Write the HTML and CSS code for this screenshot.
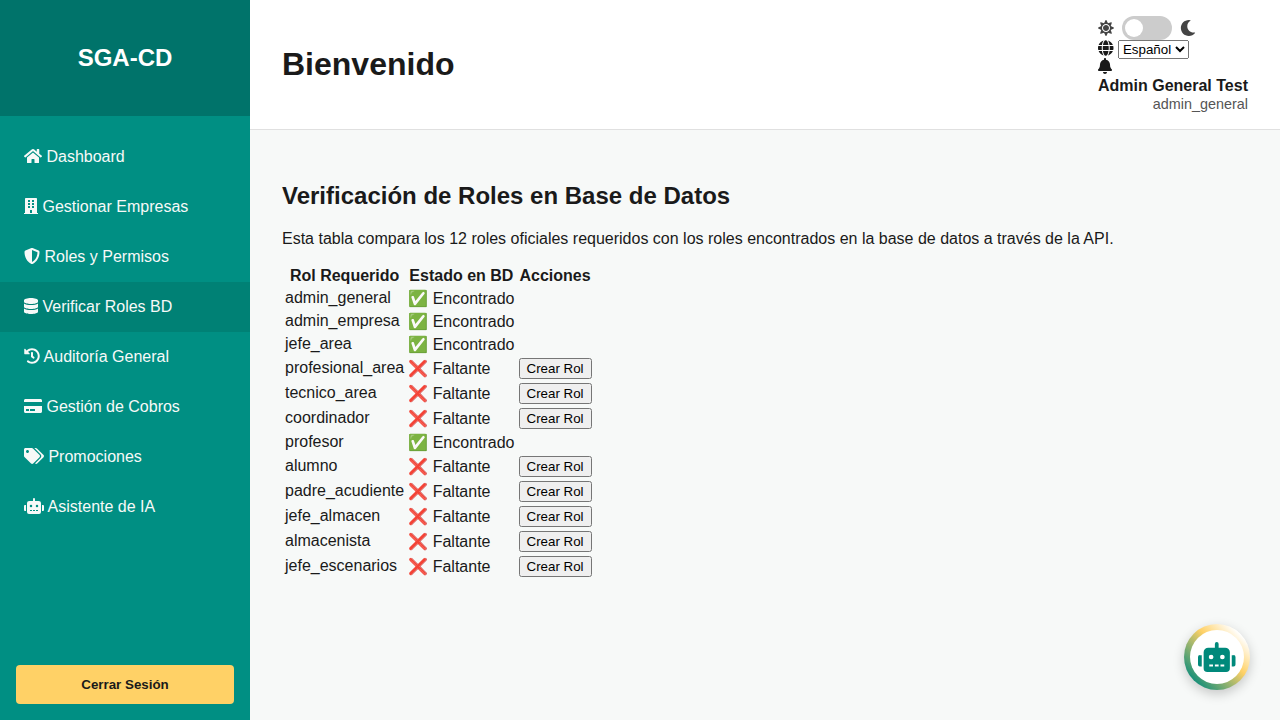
FILE: index.html
```html
<!DOCTYPE html>
<html lang="es">
<head>
    <meta charset="UTF-8">
    <meta name="viewport" content="width=device-width, initial-scale=1.0">
    <title>SGA-CD</title>
    <link rel="stylesheet" href="styles.css">
</head>
<body>
    <div class="app">
        <aside class="sidebar">
            <div class="brand"><h1>SGA-CD</h1></div>
            <nav class="menu">
                <a class="menu-item" href="#"><svg class="icon" viewBox="0 0 576 512"><path d="M280.37 148.26L96 300.11V464a16 16 0 0 0 16 16l112.06-.29a16 16 0 0 0 15.92-16V368a16 16 0 0 1 16-16h64a16 16 0 0 1 16 16v95.64a16 16 0 0 0 16 16.05L464 480a16 16 0 0 0 16-16V300L295.67 148.26a12.19 12.19 0 0 0-15.3 0zM571.6 251.47L488 182.56V44.05a12 12 0 0 0-12-12h-56a12 12 0 0 0-12 12v72.61L318.47 43a48 48 0 0 0-61 0L4.34 251.47a12 12 0 0 0-1.6 16.9l25.5 31A12 12 0 0 0 45.15 301l235.22-193.74a12.19 12.19 0 0 1 15.3 0L530.9 301a12 12 0 0 0 16.9-1.6l25.5-31a12 12 0 0 0-1.7-16.93z"/></svg> Dashboard</a>
                <a class="menu-item" href="#"><svg class="icon" viewBox="0 0 448 512"><path d="M436 480h-20V24c0-13.255-10.745-24-24-24H56C42.745 0 32 10.745 32 24v456H12c-6.627 0-12 5.373-12 12v20h448v-20c0-6.627-5.373-12-12-12zM128 76c0-6.627 5.373-12 12-12h40c6.627 0 12 5.373 12 12v40c0 6.627-5.373 12-12 12h-40c-6.627 0-12-5.373-12-12V76zm0 96c0-6.627 5.373-12 12-12h40c6.627 0 12 5.373 12 12v40c0 6.627-5.373 12-12 12h-40c-6.627 0-12-5.373-12-12v-40zm52 148h-40c-6.627 0-12-5.373-12-12v-40c0-6.627 5.373-12 12-12h40c6.627 0 12 5.373 12 12v40c0 6.627-5.373 12-12 12zm76 160h-64v-84c0-6.627 5.373-12 12-12h40c6.627 0 12 5.373 12 12v84zm64-172c0 6.627-5.373 12-12 12h-40c-6.627 0-12-5.373-12-12v-40c0-6.627 5.373-12 12-12h40c6.627 0 12 5.373 12 12v40zm0-96c0 6.627-5.373 12-12 12h-40c-6.627 0-12-5.373-12-12v-40c0-6.627 5.373-12 12-12h40c6.627 0 12 5.373 12 12v40zm0-96c0 6.627-5.373 12-12 12h-40c-6.627 0-12-5.373-12-12V76c0-6.627 5.373-12 12-12h40c6.627 0 12 5.373 12 12v40z"/></svg> Gestionar Empresas</a>
                <a class="menu-item" href="#"><svg class="icon" viewBox="0 0 512 512"><path d="M466.5 83.7l-192-80a48.15 48.15 0 0 0-36.9 0l-192 80C27.7 91.1 16 108.6 16 128c0 198.5 114.5 335.7 221.5 380.3 11.8 4.9 25.1 4.9 36.9 0C360.1 472.6 496 349.3 496 128c0-19.4-11.7-36.9-29.5-44.3zM256.1 446.3l-.1-381 175.9 73.3c-3.3 151.4-82.1 261.1-175.8 307.7z"/></svg> Roles y Permisos</a>
                <a class="menu-item active" href="#"><svg class="icon" viewBox="0 0 448 512"><path d="M448 73.143v45.714C448 159.143 347.667 192 224 192S0 159.143 0 118.857V73.143C0 32.857 100.333 0 224 0s224 32.857 224 73.143zM448 176v102.857C448 319.143 347.667 352 224 352S0 319.143 0 278.857V176c48.125 33.143 136.208 48.572 224 48.572S399.874 209.143 448 176zm0 160v102.857C448 479.143 347.667 512 224 512S0 479.143 0 438.857V336c48.125 33.143 136.208 48.572 224 48.572S399.874 369.143 448 336z"/></svg> Verificar Roles BD</a>
                <a class="menu-item" href="#"><svg class="icon" viewBox="0 0 512 512"><path d="M504 255.531c.253 136.64-111.18 248.372-247.82 248.468-59.015.042-113.223-20.53-155.822-54.911-11.077-8.94-11.905-25.541-1.839-35.607l11.267-11.267c8.609-8.609 22.353-9.551 31.891-1.984C173.062 425.135 212.781 440 256 440c101.705 0 184-82.311 184-184 0-101.705-82.311-184-184-184-48.814 0-93.149 18.969-126.068 49.932l50.754 50.754c10.08 10.08 2.941 27.314-11.313 27.314H24c-8.837 0-16-7.163-16-16V38.627c0-14.254 17.234-21.393 27.314-11.314l49.372 49.372C129.209 34.136 189.552 8 256 8c136.81 0 247.747 110.78 248 247.531zm-180.912 78.784l9.823-12.63c8.138-10.463 6.253-25.542-4.21-33.679L288 256.349V152c0-13.255-10.745-24-24-24h-16c-13.255 0-24 10.745-24 24v135.651l65.409 50.874c10.463 8.137 25.541 6.253 33.679-4.21z"/></svg> Auditoría General</a>
                <a class="menu-item" href="#"><svg class="icon" viewBox="0 0 576 512"><path d="M0 432c0 26.5 21.5 48 48 48h480c26.5 0 48-21.5 48-48V256H0v176zm192-68c0-6.6 5.4-12 12-12h136c6.6 0 12 5.4 12 12v40c0 6.6-5.4 12-12 12H204c-6.6 0-12-5.4-12-12v-40zm-128 0c0-6.6 5.4-12 12-12h72c6.6 0 12 5.4 12 12v40c0 6.6-5.4 12-12 12H76c-6.6 0-12-5.4-12-12v-40zM576 80v48H0V80c0-26.5 21.5-48 48-48h480c26.5 0 48 21.5 48 48z"/></svg> Gestión de Cobros</a>
                <a class="menu-item" href="#"><svg class="icon" viewBox="0 0 640 512"><path d="M497.941 225.941L286.059 14.059A48 48 0 0 0 252.118 0H48C21.49 0 0 21.49 0 48v204.118a48 48 0 0 0 14.059 33.941l211.882 211.882c18.744 18.745 49.136 18.746 67.882 0l204.118-204.118c18.745-18.745 18.745-49.137 0-67.882zM112 160c-26.51 0-48-21.49-48-48s21.49-48 48-48 48 21.49 48 48-21.49 48-48 48zm513.941 133.823L421.823 497.941c-18.745 18.745-49.137 18.745-67.882 0l-.36-.36L527.64 323.522c16.999-16.999 26.36-39.6 26.36-63.64s-9.362-46.641-26.36-63.64L331.397 0h48.721a48 48 0 0 1 33.941 14.059l211.882 211.882c18.745 18.745 18.745 49.137 0 67.882z"/></svg> Promociones</a>
                <a class="menu-item" href="#"><svg class="icon" viewBox="0 0 640 512"><path d="M32,224H64V416H32A31.96166,31.96166,0,0,1,0,384V256A31.96166,31.96166,0,0,1,32,224Zm512-48V448a64.06328,64.06328,0,0,1-64,64H160a64.06328,64.06328,0,0,1-64-64V176a79.974,79.974,0,0,1,80-80H288V32a32,32,0,0,1,64,0V96H464A79.974,79.974,0,0,1,544,176ZM264,256a40,40,0,1,0-40,40A39.997,39.997,0,0,0,264,256Zm-8,128H192v32h64Zm96,0H288v32h64ZM456,256a40,40,0,1,0-40,40A39.997,39.997,0,0,0,456,256Zm-8,128H384v32h64ZM640,256V384a31.96166,31.96166,0,0,1-32,32H576V224h32A31.96166,31.96166,0,0,1,640,256Z"/></svg> Asistente de IA</a>
            </nav>
            <div class="sidebar-footer">
                <button class="logout" type="button">Cerrar Sesión</button>
            </div>
        </aside>

        <div class="main">
            <header class="topbar">
                <h2 class="page-title">Bienvenido</h2>
                <div class="user-box">
                    <div class="theme-row">
                        <svg class="icon" viewBox="0 0 512 512"><path d="M256 160c-52.9 0-96 43.1-96 96s43.1 96 96 96 96-43.1 96-96-43.1-96-96-96zm246.4 80.5l-94.7-47.3 33.5-100.4c4.5-13.6-8.4-26.5-21.9-21.9l-100.4 33.5-47.4-94.8c-6.4-12.8-24.6-12.8-31 0l-47.3 94.7L92.7 70.8c-13.6-4.5-26.5 8.4-21.9 21.9l33.5 100.4-94.7 47.4c-12.8 6.4-12.8 24.6 0 31l94.7 47.3-33.5 100.5c-4.5 13.6 8.4 26.5 21.9 21.9l100.4-33.5 47.3 94.7c6.4 12.8 24.6 12.8 31 0l47.3-94.7 100.4 33.5c13.6 4.5 26.5-8.4 21.9-21.9l-33.5-100.4 94.7-47.3c13-6.5 13-24.7.2-31.1zm-155.9 106c-49.9 49.9-131.1 49.9-181 0-49.9-49.9-49.9-131.1 0-181 49.9-49.9 131.1-49.9 181 0 49.9 49.9 49.9 131.1 0 181z"/></svg>
                        <span class="switch"><span class="knob"></span></span>
                        <svg class="icon" viewBox="0 0 512 512"><path d="M283.211 512c78.962 0 151.079-35.925 198.857-94.792 7.068-8.708-.639-21.43-11.562-19.35-124.203 23.654-238.262-71.576-238.262-196.954 0-72.222 38.662-138.635 101.498-174.394 9.686-5.512 7.25-20.197-3.756-22.23A258.156 258.156 0 0 0 283.211 0c-141.309 0-256 114.511-256 256 0 141.309 114.511 256 256 256z"/></svg>
                    </div>
                    <div class="lang-row">
                        <svg class="icon" viewBox="0 0 496 512"><path d="M336.5 160C322 70.7 287.8 8 248 8s-74 62.7-88.5 152h177zM152 256c0 22.2 1.2 43.5 3.3 64h185.3c2.1-20.5 3.3-41.8 3.3-64s-1.2-43.5-3.3-64H155.3c-2.1 20.5-3.3 41.8-3.3 64zm324.7-96c-28.6-67.9-86.5-120.4-158-141.6 24.4 33.8 41.2 84.7 50 141.6h108zM177.2 18.4C105.8 39.6 47.8 92.1 19.3 160h108c8.7-56.9 25.5-107.8 49.9-141.6zM487.4 192H372.7c2.1 21 3.3 42.5 3.3 64s-1.2 43-3.3 64h114.6c5.5-20.5 8.6-41.8 8.6-64s-3.1-43.5-8.5-64zM120 256c0-21.5 1.2-43 3.3-64H8.6C3.2 212.5 0 233.8 0 256s3.2 43.5 8.6 64h114.6c-2-21-3.2-42.5-3.2-64zm39.5 96c14.5 89.3 48.7 152 88.5 152s74-62.7 88.5-152h-177zm159.3 141.6c71.4-21.2 129.4-73.7 158-141.6h-108c-8.8 56.9-25.6 107.8-50 141.6zM19.3 352c28.6 67.9 86.5 120.4 158 141.6-24.4-33.8-41.2-84.7-50-141.6h-108z"/></svg>
                        <select class="lang-select">
                            <option>Español</option>
                            <option>English</option>
                        </select>
                    </div>
                    <div class="bell-row">
                        <svg class="icon" viewBox="0 0 448 512"><path d="M224 512c35.32 0 63.97-28.65 63.97-64H160.03c0 35.35 28.65 64 63.97 64zm215.39-149.71c-19.32-20.76-55.47-51.99-55.47-154.29 0-77.7-54.48-139.9-127.94-155.16V32c0-17.67-14.32-32-31.98-32s-31.98 14.33-31.98 32v20.84C118.56 68.1 64.08 130.3 64.08 208c0 102.3-36.15 133.53-55.47 154.29-6 6.45-8.66 14.16-8.61 21.71.11 16.4 12.98 32 32.1 32h383.8c19.12 0 32-15.6 32.1-32 .05-7.55-2.61-15.27-8.61-21.71z"/></svg>
                    </div>
                    <div class="user-name">Admin General Test</div>
                    <div class="user-role">admin_general</div>
                </div>
            </header>

            <main class="content">
                <h3 class="section-title">Verificación de Roles en Base de Datos</h3>
                <p class="section-text">Esta tabla compara los 12 roles oficiales requeridos con los roles encontrados en la base de datos a través de la API.</p>
                <table class="roles-table">
                    <thead>
                        <tr><th>Rol Requerido</th><th>Estado en BD</th><th>Acciones</th></tr>
                    </thead>
                    <tbody>
                        <tr><td>admin_general</td><td>✅ Encontrado</td><td></td></tr>
                        <tr><td>admin_empresa</td><td>✅ Encontrado</td><td></td></tr>
                        <tr><td>jefe_area</td><td>✅ Encontrado</td><td></td></tr>
                        <tr><td>profesional_area</td><td>❌ Faltante</td><td><button type="button">Crear Rol</button></td></tr>
                        <tr><td>tecnico_area</td><td>❌ Faltante</td><td><button type="button">Crear Rol</button></td></tr>
                        <tr><td>coordinador</td><td>❌ Faltante</td><td><button type="button">Crear Rol</button></td></tr>
                        <tr><td>profesor</td><td>✅ Encontrado</td><td></td></tr>
                        <tr><td>alumno</td><td>❌ Faltante</td><td><button type="button">Crear Rol</button></td></tr>
                        <tr><td>padre_acudiente</td><td>❌ Faltante</td><td><button type="button">Crear Rol</button></td></tr>
                        <tr><td>jefe_almacen</td><td>❌ Faltante</td><td><button type="button">Crear Rol</button></td></tr>
                        <tr><td>almacenista</td><td>❌ Faltante</td><td><button type="button">Crear Rol</button></td></tr>
                        <tr><td>jefe_escenarios</td><td>❌ Faltante</td><td><button type="button">Crear Rol</button></td></tr>
                    </tbody>
                </table>
            </main>
        </div>
    </div>

    <!-- Chat button -->
    <button class="chat-fab" type="button">
        <span class="chat-fab-inner">
            <svg class="icon" viewBox="0 0 640 512"><path d="M32,224H64V416H32A31.96166,31.96166,0,0,1,0,384V256A31.96166,31.96166,0,0,1,32,224Zm512-48V448a64.06328,64.06328,0,0,1-64,64H160a64.06328,64.06328,0,0,1-64-64V176a79.974,79.974,0,0,1,80-80H288V32a32,32,0,0,1,64,0V96H464A79.974,79.974,0,0,1,544,176ZM264,256a40,40,0,1,0-40,40A39.997,39.997,0,0,0,264,256Zm-8,128H192v32h64Zm96,0H288v32h64ZM456,256a40,40,0,1,0-40,40A39.997,39.997,0,0,0,456,256Zm-8,128H384v32h64ZM640,256V384a31.96166,31.96166,0,0,1-32,32H576V224h32A31.96166,31.96166,0,0,1,640,256Z"/></svg>
        </span>
    </button>
</body>
</html>
```

FILE: styles.css
```css
* {
    box-sizing: border-box;
}
body {
    margin: 0;
    font-family: "Liberation Sans", Arial, sans-serif;
    font-size: 16px;
    color: #1a1a1a;
    background-color: #f7f9f8;
}
.icon {
    height: 1em;
    width: auto;
    vertical-align: -0.125em;
    fill: currentColor;
}
.app {
    display: flex;
    height: 100vh;
}

/* Sidebar */
.sidebar {
    width: 250px;
    flex-shrink: 0;
    display: flex;
    flex-direction: column;
    background-color: #008f83;
    color: #f7f9f8;
}
.brand {
    height: 116px;
    padding-top: 44px;
    text-align: center;
    color: #fff;
    background-color: #00736a;
}
.brand h1 {
    margin: 0;
    font-size: 24px;
    line-height: 28px;
}
.menu {
    flex: 1;
    padding-top: 16px;
}
.menu-item {
    display: block;
    height: 50px;
    padding: 16px 24px;
    line-height: 18px;
    color: inherit;
    text-decoration: none;
}
.menu-item.active {
    background-color: #008175;
}
.sidebar-footer {
    padding: 16px;
}
.logout {
    width: 100%;
    height: 39px;
    border: none;
    border-radius: 4px;
    background-color: #ffd166;
    color: #1a1a1a;
    font-family: inherit;
    font-size: 13.33px;
    font-weight: bold;
}

/* Top bar */
.main {
    flex: 1;
    min-width: 0;
}
.topbar {
    height: 130px;
    display: flex;
    justify-content: space-between;
    align-items: center;
    padding: 0 32px;
    background-color: #fff;
    border-bottom: 1px solid #e0e0e0;
}
.page-title {
    margin: 0;
    font-size: 32px;
}
.user-box {
    width: 150px;
}
.theme-row {
    display: flex;
    align-items: center;
    gap: 8px;
    height: 24px;
    color: #444;
}
.switch {
    width: 50px;
    height: 24px;
    padding: 3px;
    border-radius: 12px;
    background-color: #ccc;
}
.knob {
    display: block;
    width: 18px;
    height: 18px;
    border-radius: 50%;
    background-color: #fff;
}
.lang-row {
    height: 18px;
    line-height: 18px;
}
.lang-select {
    font-family: inherit;
    font-size: 13.33px;
}
.bell-row {
    height: 19px;
    line-height: 18px;
}
.user-name {
    font-weight: bold;
    line-height: 18px;
}
.user-role {
    text-align: right;
    font-size: 14.4px;
    line-height: 19px;
    color: #555;
}

/* Content */
.content {
    padding: 32px;
}
.section-title {
    margin: 20px 0 20px;
    font-size: 24px;
}
.section-text {
    margin: 0 0 16px;
}
.roles-table td:first-child {
    padding: 0 1px 2px;
}
button {
    font-family: inherit;
}

/* Chat button */
.chat-fab {
    position: fixed;
    right: 30px;
    bottom: 30px;
    width: 66px;
    height: 66px;
    padding: 6px;
    border: none;
    border-radius: 50%;
    background-image: linear-gradient(45deg, #00897b 10%, #ffd166 58%, #fff 85%);
    box-shadow: 0 4px 12px rgba(0, 0, 0, 0.2);
}
.chat-fab-inner {
    display: flex;
    align-items: center;
    justify-content: center;
    height: 100%;
    border-radius: 50%;
    background-color: #fff;
    color: #00897b;
    font-size: 30px;
}
```
